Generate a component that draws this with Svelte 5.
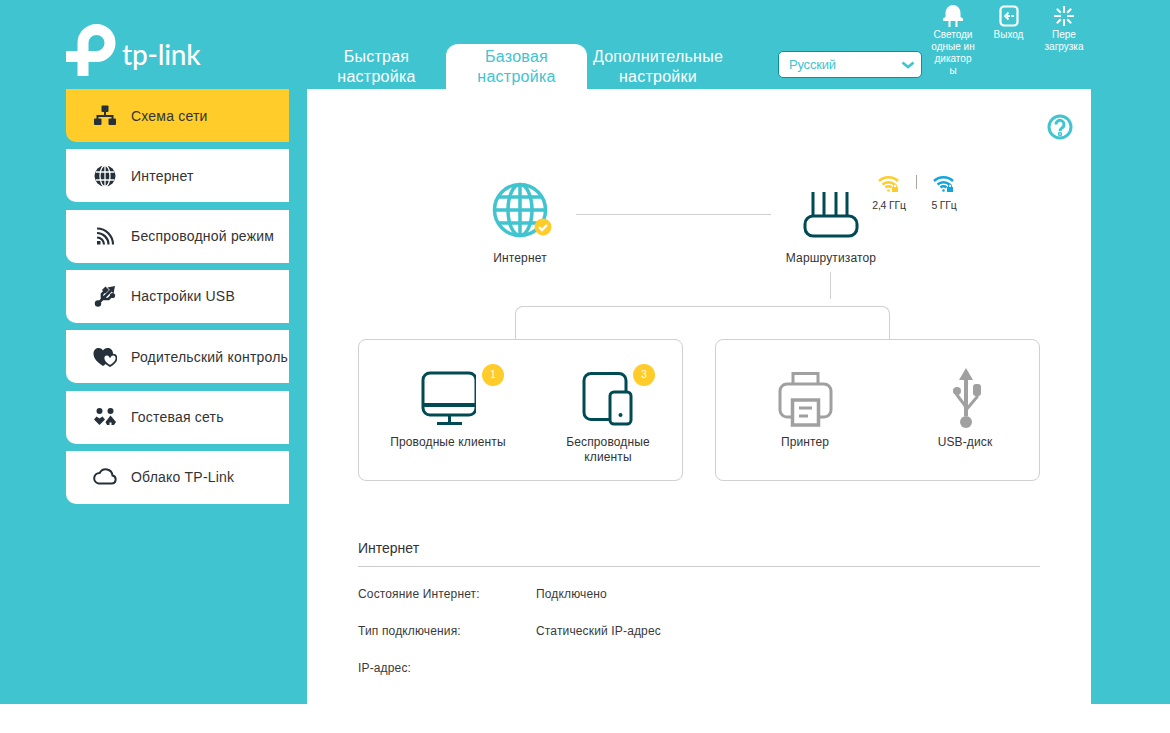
<script>
	const tabs = [
		{ label: 'Быстрая настройка', width: 139 },
		{ label: 'Базовая настройка', width: 141, active: true },
		{ label: 'Дополнительные настройки', width: 142 }
	];

	const icons = {
		net: '<rect x="8.500" y="1.500" width="7" height="6.500" rx="1"/><rect x="1" y="14.500" width="7.500" height="6.500" rx="1"/><rect x="15.500" y="14.500" width="7.500" height="6.500" rx="1"/><path d="M12 8v4M4.500 15v-3h15v3" fill="none" stroke="currentColor" stroke-width="2"/>',
		globe: '<circle cx="12" cy="12" r="10.500"/><g fill="none" stroke="#fff" stroke-width="1.300"><ellipse cx="12" cy="12" rx="5" ry="10.500"/><path d="M12 1.500v21M2.500 8h19M2.500 16h19"/></g>',
		wifi: '<g fill="none" stroke="currentColor" stroke-width="2.200"><path d="M4 4.500a16 16 0 0 1 16 16"/><path d="M4 9a11.500 11.500 0 0 1 11.500 11.500"/><path d="M4 13.500a7 7 0 0 1 7 7"/></g><path d="M4 17h3.500v3.500H4z"/>',
		usb: '<circle cx="5" cy="19.500" r="3.200"/><path d="M5 19.500L18 6.500M9 15.500V10l3-3M10 15h5.500l3-3" fill="none" stroke="currentColor" stroke-width="2.600"/><path d="M22 2l-7.500 1.500 6 6z"/><rect x="10" y="3.500" width="5" height="5" transform="rotate(45 12.500 6)"/><circle cx="19.500" cy="11.500" r="2.600"/>',
		heart: '<path d="M10 21C4 17 0.500 13.500 0.500 8.500 0.500 5 3 3 5.800 3 7.800 3 9.200 4 10 5.500 10.800 4 12.500 3 14.500 3 17.500 3 20 5 20 8.500 20 13.500 16 17 10 21z"/><path d="M17 21c-3.600-2.200-6.500-4.800-6.500-7.800 0-2.100 1.500-3.500 3.300-3.500 1.300 0 2.500.7 3.200 1.800.7-1.100 1.900-1.800 3.200-1.800 1.800 0 3.300 1.400 3.300 3.500 0 3-2.900 5.600-6.500 7.800z" fill="#fff" stroke="currentColor" stroke-width="1.800"/>',
		guest: '<circle cx="6.500" cy="6" r="3"/><circle cx="17.500" cy="6" r="3"/><path d="M6.500 20L1 14.500 3.500 11.500 6.500 13.500 9.500 11.500 12 14.500zM17.500 10.500L12.500 17l1.500 3h2.500v-2.500h2V20H21l2-3z"/>',
		cloud: '<path d="M5.500 18.500h13a4 4 0 0 0 1-7.900 6.800 6.800 0 0 0-12.800-2.600A5.300 5.300 0 0 0 5.500 18.500z" fill="none" stroke="currentColor" stroke-width="2"/>'
	};

	const menu = [
		{ label: 'Схема сети', icon: 'net', active: true },
		{ label: 'Интернет', icon: 'globe' },
		{ label: 'Беспроводной режим', icon: 'wifi' },
		{ label: 'Настройки USB', icon: 'usb' },
		{ label: 'Родительский контроль', icon: 'heart' },
		{ label: 'Гостевая сеть', icon: 'guest' },
		{ label: 'Облако TP-Link', icon: 'cloud' }
	];

	const info = [
		['Состояние Интернет:', 'Подключено'],
		['Тип подключения:', 'Статический IP-адрес'],
		['IP-адрес:', '']
	];
</script>

<div class="page">
	<header>
		<div class="logo">
			<svg width="50" height="54" viewBox="66 24 50 54">
				<path d="M66 56.500H96.500A13.500 13.500 0 1 0 83 43V76" fill="none" stroke="#fff" stroke-width="11" />
			</svg>
			<span class="wordmark">tp-link</span>
		</div>
		<nav class="tabs">
			{#each tabs as tab}
				<div class="tab" class:active={tab.active} style="width: {tab.width}px">{tab.label}</div>
			{/each}
		</nav>
		<div class="lang">
			<span>Русский</span>
			<svg width="14" height="8" viewBox="0 0 14 8"><path d="M1.500 1.500L7 6l5.500-4.500" fill="none" stroke="#40c4d0" stroke-width="2.600" /></svg>
		</div>
		<div class="actions">
			<div class="action">
				<svg width="20" height="22" viewBox="0 0 20 22" fill="#fff">
					<path d="M2.500 12V8a7.500 8 0 0 1 15 0v4l2.500 1.500V16H0v-2.500z" />
					<path d="M5.500 16h2v6h-2zM12.500 16h2v6h-2z" />
				</svg>
				<span>Светодиодные индикаторы</span>
			</div>
			<div class="action">
				<svg width="20" height="22" viewBox="0 0 20 22" fill="none" stroke="#fff">
					<path d="M5 1.500h10a3.500 3.500 0 0 1 3.500 3.500v12a3.500 3.500 0 0 1-3.500 3.500H5A3.500 3.500 0 0 1 1.500 17V5A3.500 3.500 0 0 1 5 1.500z" stroke-width="2.200" />
					<path d="M8 11h7" stroke-width="1.800" stroke-dasharray="3 1.500" />
					<path d="M9.500 7.500L6 11l3.500 3.500" stroke-width="1.800" />
				</svg>
				<span>Выход</span>
			</div>
			<div class="action">
				<svg width="22" height="22" viewBox="0 0 22 22" fill="none" stroke="#fff" stroke-width="2">
					<path d="M11 1v7M11 14v7M1 11h7M14 11h7M3.800 3.800l4 4M14.200 14.200l4 4M18.200 3.800l-4 4M7.800 14.200l-4 4" />
				</svg>
				<span class="reboot">Пере<br />загрузка</span>
			</div>
		</div>
	</header>

	<div class="body">
		<aside>
			{#each menu as item}
				<div class="item" class:active={item.active}>
					<svg class="item-icon" width="24" height="24" viewBox="0 0 24 24" fill="currentColor">{@html icons[item.icon]}</svg>
					<span>{item.label}</span>
				</div>
			{/each}
		</aside>

		<main>
			<svg class="help" width="26" height="26" viewBox="0 0 26 26" fill="none" stroke="#40c4d0" stroke-width="3">
				<circle cx="13" cy="13" r="11" />
				<path d="M9 10.500a4 4 0 1 1 6.500 3c-1.500 1.200-2.500 1.800-2.500 3.500" />
				<circle cx="13" cy="20" r=".7" />
			</svg>

			<div class="top-row">
				<div class="node">
					<div class="node-icon">
						<svg width="62" height="60" viewBox="0 0 62 60" fill="none" stroke="#40c4d0" stroke-width="3.500">
							<circle cx="29" cy="29" r="25.500" />
							<ellipse cx="29" cy="29" rx="12" ry="25.500" />
							<path d="M29 3.500v51M3.500 29h51M7 16h44M7 42h44" />
							<circle cx="52" cy="46" r="8.500" fill="#ffcc29" stroke="none" />
							<path d="M48 46l3 3 5-5" stroke="#fff" stroke-width="2.400" />
						</svg>
					</div>
					<span>Интернет</span>
				</div>
				<div class="link"></div>
				<div class="node router">
					<div class="node-icon">
						<svg width="58" height="48" viewBox="0 0 58 48" fill="none" stroke="#004a53" stroke-width="3">
							<path d="M11 1v24M22 1v24M34 1v24M45 1v24" />
							<rect x="3" y="25" width="52" height="20" rx="8" />
						</svg>
					</div>
					<span>Маршрутизатор</span>
					<div class="bands">
						<div class="band">
							<svg width="24" height="18" viewBox="0 0 24 18" fill="none" stroke="#ffcc29" stroke-width="2.500">
								<path d="M2 6a14 14 0 0 1 19 0M5.500 9.500a9 9 0 0 1 12 0M8.500 12.500a4.500 4.500 0 0 1 6 0" />
								<circle cx="11.500" cy="15.500" r="1.300" fill="#ffcc29" stroke="none" />
								<rect x="15" y="12" width="6" height="5" fill="#ffcc29" stroke="none" />
								<path d="M16.500 12v-1.500a1.500 1.500 0 0 1 3 0V12" stroke-width="1" />
							</svg>
							<span>2,4 ГГц</span>
						</div>
						<div class="divider"></div>
						<div class="band">
							<svg width="24" height="18" viewBox="0 0 24 18" fill="none" stroke="#12a5dc" stroke-width="2.500">
								<path d="M2 6a14 14 0 0 1 19 0M5.500 9.500a9 9 0 0 1 12 0M8.500 12.500a4.500 4.500 0 0 1 6 0" />
								<circle cx="11.500" cy="15.500" r="1.300" fill="#12a5dc" stroke="none" />
								<rect x="15" y="12" width="6" height="5" fill="#12a5dc" stroke="none" />
								<path d="M16.500 12v-1.500a1.500 1.500 0 0 1 3 0V12" stroke-width="1" />
							</svg>
							<span>5 ГГц</span>
						</div>
					</div>
				</div>
			</div>

			<div class="stem"></div>
			<div class="bracket"></div>

			<div class="groups">
				<div class="group">
					<div class="client">
						<svg width="56" height="56" viewBox="0 0 56 56" fill="none" stroke="#004a53" stroke-width="3">
							<rect x="3" y="2" width="53" height="42" rx="7" />
							<path d="M3 34h53" stroke-width="4" />
							<path d="M29.500 44v8M17 52.500h25" />
						</svg>
						<b class="badge">1</b>
						<span>Проводные клиенты</span>
					</div>
					<div class="client">
						<svg width="56" height="56" viewBox="0 0 56 56" fill="none" stroke="#004a53" stroke-width="3">
							<path d="M30 48.500H11a7 7 0 0 1-7-7V9.500a7 7 0 0 1 7-7h28a7 7 0 0 1 7 7V20" />
							<rect x="30" y="21" width="21" height="32" rx="4" />
							<circle cx="40.500" cy="44" r="2" fill="#004a53" stroke="none" />
						</svg>
						<b class="badge second">3</b>
						<span>Беспроводные клиенты</span>
					</div>
				</div>
				<div class="group">
					<div class="client">
						<svg width="56" height="56" viewBox="0 0 56 56" fill="none" stroke="#a0a0a0" stroke-width="3">
							<path d="M16 13V2.500h25V13" />
							<path d="M14 46H10a7 7 0 0 1-7-7V20a7 7 0 0 1 7-7h37a7 7 0 0 1 7 7v19a7 7 0 0 1-7 7h-4" />
							<path d="M15.500 29h26v25h-26z" stroke-width="3.500" />
							<path d="M22 37h13M22 45h9" />
						</svg>
						<span>Принтер</span>
					</div>
					<div class="client">
						<svg class="usb" width="56" height="60" viewBox="0 0 56 60" fill="#a0a0a0">
							<path d="M29 0l7 12h-5v36h-4V12h-5z" />
							<path d="M20 24v3l9 12M40 26v3L29 42" fill="none" stroke="#a0a0a0" stroke-width="3" />
							<circle cx="20" cy="23" r="4" />
							<rect x="36" y="16" width="8" height="12" rx="3" />
							<circle cx="29" cy="54" r="6" />
						</svg>
						<span>USB-диск</span>
					</div>
				</div>
			</div>

			<section class="status">
				<h2>Интернет</h2>
				<dl>
					{#each info as row}
						<dt>{row[0]}</dt>
						<dd>{row[1]}</dd>
					{/each}
				</dl>
			</section>
		</main>
	</div>
</div>

<style>
	:global(body) {
		margin: 0;
		background: #fff;
		font-family: "Liberation Sans", Arial, sans-serif;
		color: #3a3a3a;
	}
	.page {
		height: 704px;
		width: 1170px;
		background: #40c4d0;
		overflow: hidden;
	}
	header {
		height: 89px;
		padding-left: 66px;
		display: flex;
		position: relative;
	}
	.logo {
		width: 241px;
		padding-top: 24px;
		display: flex;
		align-items: flex-start;
		box-sizing: border-box;
		color: #fff;
	}
	.wordmark {
		margin: 12px 0 0 6px;
		font-family: Lato, sans-serif;
		font-size: 28px;
		line-height: 36px;
		font-weight: 500;
		letter-spacing: -0.2px;
	}
	.tabs {
		display: flex;
		align-items: flex-end;
		height: 89px;
	}
	.tab {
		box-sizing: border-box;
		height: 45px;
		padding-top: 3px;
		font-size: 16px;
		line-height: 20px;
		letter-spacing: 0.25px;
		color: #fff;
		text-align: center;
		border-radius: 12px 12px 0 0;
	}
	.tab.active {
		background: #fff;
		color: #40c4d0;
	}
	.lang {
		box-sizing: border-box;
		width: 144px;
		height: 27px;
		margin: 51px 0 0 49px;
		padding: 0 6px 0 10px;
		display: flex;
		align-items: center;
		justify-content: space-between;
		background: #fff;
		border: 1px solid #0b8f9b;
		border-radius: 5px;
		font-size: 13px;
		letter-spacing: -0.2px;
		color: #40c4d0;
	}
	.actions {
		display: flex;
		margin-left: 8px;
	}
	.action {
		width: 46px;
		margin-right: 9.5px;
		padding-top: 5px;
		display: flex;
		flex-direction: column;
		align-items: center;
		font-size: 10px;
		line-height: 12px;
		color: #fff;
		text-align: center;
	}
	.action span {
		margin-top: 2px;
		word-break: break-all;
		width: 44px;
	}
	.action .reboot {
		word-break: normal;
	}
	.body {
		display: flex;
		padding-left: 66px;
		height: 615px;
	}
	aside {
		width: 223px;
		margin-right: 18px;
		display: flex;
		flex-direction: column;
		gap: 7.33px;
	}
	.item {
		height: 53px;
		flex: none;
		display: flex;
		align-items: center;
		background: #fff;
		border-radius: 0 0 0 10px;
		font-size: 14px;
		letter-spacing: 0.2px;
		color: #333;
		white-space: nowrap;
		overflow: hidden;
	}
	.item.active {
		background: #ffcc29;
	}
	.item-icon {
		flex: none;
		margin: 0 14px 0 27px;
		color: #26303a;
	}
	main {
		position: relative;
		box-sizing: border-box;
		width: 784px;
		padding: 0 51px;
		background: #fff;
	}
	.help {
		position: absolute;
		top: 25px;
		right: 18px;
	}
	.top-row {
		display: flex;
		padding: 92px 0 0 106px;
		height: 90px;
	}
	.node {
		position: relative;
		width: 112px;
		display: flex;
		flex-direction: column;
		align-items: center;
		font-size: 12px;
		line-height: 14px;
		letter-spacing: 0.15px;
		color: #333;
	}
	.node-icon {
		height: 70px;
		display: flex;
		justify-content: center;
	}
	.node:not(.router) .node-icon svg {
		margin-left: 4px;
	}
	.link {
		width: 195px;
		height: 1px;
		margin-top: 33px;
		background: #d0d0d0;
	}
	.router {
		width: 100px;
		margin-left: 10px;
	}
	.router .node-icon {
		padding-top: 10px;
		height: 60px;
	}
	.bands {
		position: absolute;
		top: -6px;
		left: 85px;
		display: flex;
		align-items: flex-start;
	}
	.band {
		display: flex;
		flex-direction: column;
		align-items: center;
		font-size: 10.500px;
		line-height: 14px;
		letter-spacing: -0.2px;
		white-space: nowrap;
		width: 46px;
	}
	.band span {
		margin-top: 5px;
	}
	.divider {
		width: 1px;
		height: 14px;
		background: #a8a8a0;
		margin: 0 4px;
	}
	.stem {
		width: 1px;
		height: 27px;
		margin: 1px 0 0 472px;
		background: #d0d0d0;
	}
	.bracket {
		box-sizing: border-box;
		width: 375px;
		height: 33px;
		margin: 7px 0 0 157px;
		border: 1px solid #d0d0d0;
		border-bottom: 0;
		border-radius: 8px 8px 0 0;
	}
	.groups {
		display: grid;
		grid-template-columns: 325px 325px;
		gap: 32px;
	}
	.group {
		box-sizing: border-box;
		height: 142px;
		padding: 31px 0 0 9px;
		display: grid;
		grid-template-columns: 160px 160px;
		align-items: start;
		border: 1px solid #d0d0d0;
		border-radius: 8px;
		background: #fff;
	}
	.client {
		position: relative;
		display: flex;
		flex-direction: column;
		align-items: center;
		text-align: center;
		font-size: 12px;
		line-height: 15px;
		letter-spacing: 0.12px;
		color: #333;
	}
	.client svg {
		height: 56px;
	}
	.client svg.usb {
		height: 60px;
		margin: -3px 0 -1px;
	}
	.client span {
		width: 120px;
		margin-top: 8px;
	}
	.badge {
		position: absolute;
		top: -7px;
		left: 114px;
		width: 22px;
		height: 22px;
		border-radius: 50%;
		background: #ffcc29;
		color: #fff;
		font-size: 10px;
		font-weight: normal;
		line-height: 22px;
	}
	.badge.second {
		left: 105px;
	}
	.status {
		margin-top: 58px;
	}
	h2 {
		margin: 0;
		padding-bottom: 9px;
		border-bottom: 1px solid #ccc;
		font-size: 14px;
		line-height: 18px;
		font-weight: normal;
		color: #333;
	}
	dl {
		margin: 18px 0 0;
		display: grid;
		grid-template-columns: 178px 1fr;
		grid-auto-rows: 37px;
		font-size: 12px;
		line-height: 18px;
		letter-spacing: 0.15px;
	}
	dd {
		margin: 0;
	}
</style>
